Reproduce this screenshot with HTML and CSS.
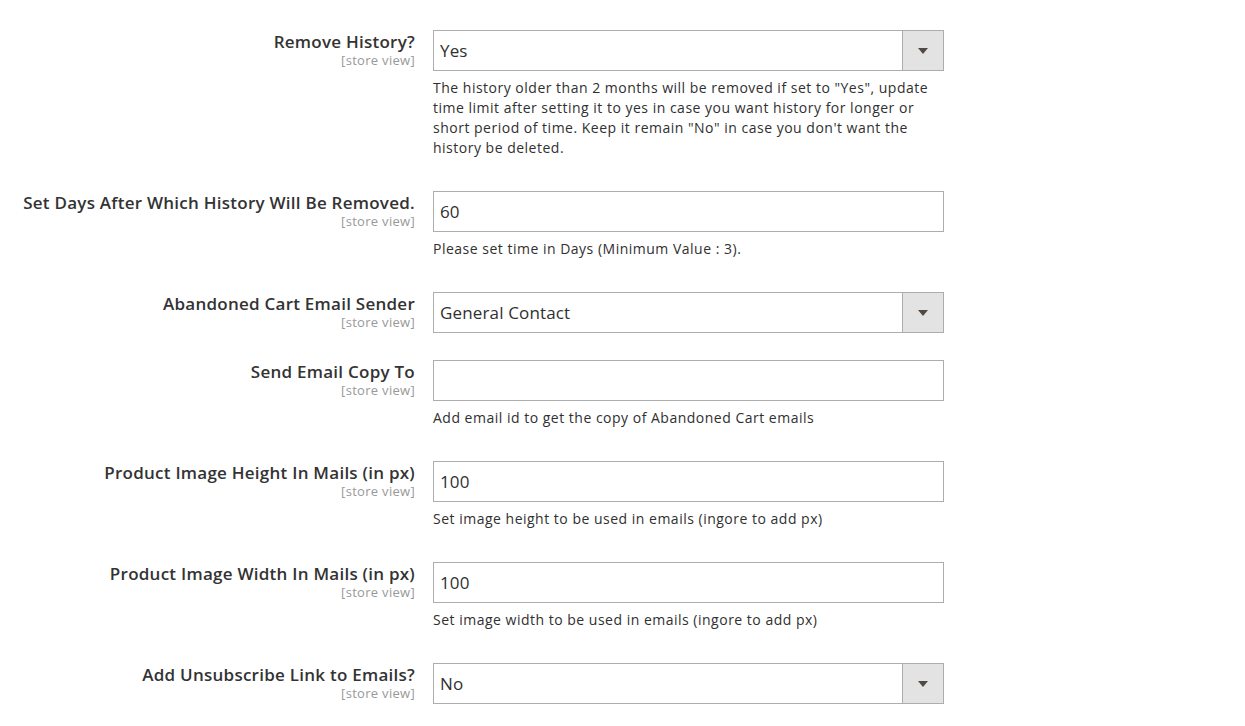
FILE: index.html
```html
<!DOCTYPE html>
<html>
<head>
<meta charset="utf-8">
<link rel="stylesheet" href="styles.css">
</head>
<body>
<div class="form">
  <div class="row">
    <div class="label"><span class="title">Remove History?</span><span class="scope">[store view]</span></div>
    <div class="control">
      <div class="select"><span class="value">Yes</span><span class="btn"><span class="tri"></span></span></div>
      <div class="note">The history older than 2 months will be removed if set to "Yes", update time limit after setting it to yes in case you want history for longer or short period of time. Keep it remain "No" in case you don't want the history be deleted.</div>
    </div>
  </div>
  <div class="row">
    <div class="label"><span class="title">Set Days After Which History Will Be Removed.</span><span class="scope">[store view]</span></div>
    <div class="control">
      <div class="input">60</div>
      <div class="note">Please set time in Days (Minimum Value : 3).</div>
    </div>
  </div>
  <div class="row">
    <div class="label"><span class="title">Abandoned Cart Email Sender</span><span class="scope">[store view]</span></div>
    <div class="control">
      <div class="select"><span class="value">General Contact</span><span class="btn"><span class="tri"></span></span></div>
    </div>
  </div>
  <div class="row">
    <div class="label"><span class="title">Send Email Copy To</span><span class="scope">[store view]</span></div>
    <div class="control">
      <div class="input"></div>
      <div class="note">Add email id to get the copy of Abandoned Cart emails</div>
    </div>
  </div>
  <div class="row">
    <div class="label"><span class="title">Product Image Height In Mails (in px)</span><span class="scope">[store view]</span></div>
    <div class="control">
      <div class="input">100</div>
      <div class="note">Set image height to be used in emails (ingore to add px)</div>
    </div>
  </div>
  <div class="row">
    <div class="label"><span class="title">Product Image Width In Mails (in px)</span><span class="scope">[store view]</span></div>
    <div class="control">
      <div class="input">100</div>
      <div class="note">Set image width to be used in emails (ingore to add px)</div>
    </div>
  </div>
  <div class="row">
    <div class="label"><span class="title">Add Unsubscribe Link to Emails?</span><span class="scope">[store view]</span></div>
    <div class="control">
      <div class="select"><span class="value">No</span><span class="btn"><span class="tri"></span></span></div>
    </div>
  </div>
</div>
</body>
</html>
```
FILE: styles.css
```css
html, body {
  margin: 0;
  padding: 0;
  background: #ffffff;
}
body {
  font-family: "Open Sans", "Liberation Sans", sans-serif;
  color: #303030;
  width: 1245px;
  height: 726px;
  overflow: hidden;
}
.form {
  padding-top: 30px;
  display: flex;
  flex-direction: column;
  gap: 27px;
}
.row {
  display: grid;
  grid-template-columns: 415px 511px;
  column-gap: 18px;
}
.label {
  display: flex;
  flex-direction: column;
  align-items: flex-end;
  text-align: right;
  padding-top: 1px;
  white-space: nowrap;
}
.title {
  font-size: 17px;
  font-weight: 600;
  line-height: 21px;
  letter-spacing: 0.25px;
  color: #333333;
}
.scope {
  font-size: 13px;
  line-height: 16px;
  letter-spacing: 0.3px;
  color: #999999;
}
.input, .select {
  box-sizing: border-box;
  height: 41px;
  border: 1px solid #adadad;
  background: #fff;
  font-size: 17px;
  letter-spacing: 0.15px;
  line-height: 39px;
  padding-left: 6px;
  color: #303030;
}
.select {
  display: flex;
  padding-left: 0;
}
.select .value {
  flex: 1;
  padding-left: 6px;
}
.select .btn {
  width: 40px;
  background: #e3e3e3;
  border-left: 1px solid #adadad;
  display: flex;
  align-items: center;
  justify-content: center;
}
.tri {
  width: 0;
  height: 0;
  border-left: 5px solid transparent;
  border-right: 5px solid transparent;
  border-top: 6px solid #514943;
}
.note {
  font-size: 14px;
  line-height: 20px;
  letter-spacing: 0.5px;
  margin-top: 7px;
  margin-bottom: 6px;
  color: #303030;
}
```
